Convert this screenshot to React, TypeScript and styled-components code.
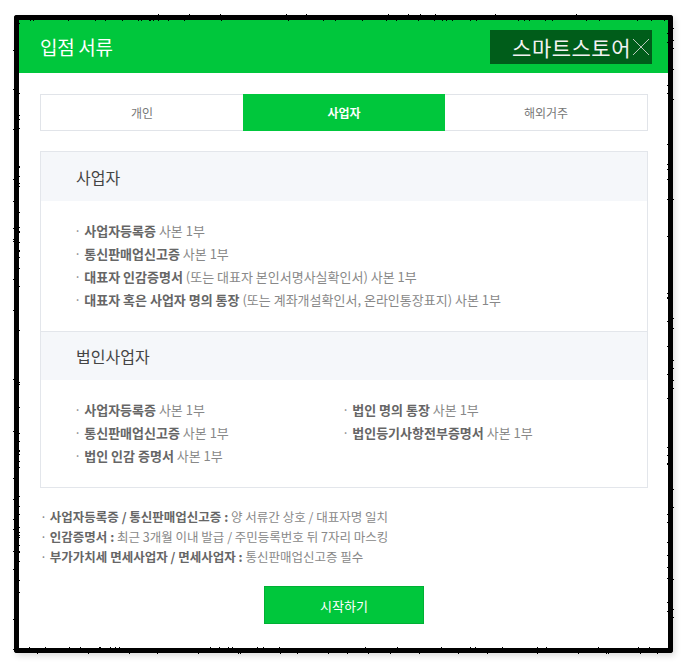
import styled, { createGlobalStyle } from "styled-components";

const GlobalStyle = createGlobalStyle`
  html, body {
    margin: 0;
    padding: 0;
    background: #ffffff;
  }
  body {
    font-family: "Noto Sans CJK KR", "Noto Sans", sans-serif;
  }
  * {
    box-sizing: border-box;
  }
`;

type Item = { bold: string; rest: string };

const soleItems: Item[] = [
  { bold: "사업자등록증", rest: " 사본 1부" },
  { bold: "통신판매업신고증", rest: " 사본 1부" },
  { bold: "대표자 인감증명서", rest: " (또는 대표자 본인서명사실확인서) 사본 1부" },
  { bold: "대표자 혹은 사업자 명의 통장", rest: " (또는 계좌개설확인서, 온라인통장표지) 사본 1부" },
];

const corpItems: Item[] = [
  { bold: "사업자등록증", rest: " 사본 1부" },
  { bold: "법인 명의 통장", rest: " 사본 1부" },
  { bold: "통신판매업신고증", rest: " 사본 1부" },
  { bold: "법인등기사항전부증명서", rest: " 사본 1부" },
  { bold: "법인 인감 증명서", rest: " 사본 1부" },
];

const notes: Item[] = [
  { bold: "사업자등록증 / 통신판매업신고증 :", rest: " 양 서류간 상호 / 대표자명 일치" },
  { bold: "인감증명서 :", rest: " 최근 3개월 이내 발급 / 주민등록번호 뒤 7자리 마스킹" },
  { bold: "부가가치세 면세사업자 / 면세사업자 :", rest: " 통신판매업신고증 필수" },
];

const tabs = ["개인", "사업자", "해외거주"];

const App = () => {
  return (
    <Page>
      <GlobalStyle />
      <svg width="0" height="0" style={{ position: "absolute" }}>
        <filter id="rough">
          <feTurbulence type="fractalNoise" baseFrequency="0.9" numOctaves="2" result="noise" />
          <feDisplacementMap in="SourceGraphic" in2="noise" scale="2.5" />
        </filter>
      </svg>
      <Frame>
        <Header>
          <Title>입점 서류</Title>
          <StoreBadge>
            스마트스토어
            <CloseMark>
              <svg width="18" height="18" viewBox="0 0 18 18">
                <path d="M1 1 L17 17 M17 1 L1 17" stroke="#b9c9bd" strokeWidth="1" fill="none" />
              </svg>
            </CloseMark>
          </StoreBadge>
        </Header>

        <Body>
          <Tabs>
            {tabs.map((t) => (
              <Tab key={t} $active={t === "사업자"}>
                {t}
              </Tab>
            ))}
          </Tabs>

          <Section>
            <SectionHead>사업자</SectionHead>
            <List>
              {soleItems.map((it) => (
                <Row key={it.bold}>
                  · <b>{it.bold}</b>
                  {it.rest}
                </Row>
              ))}
            </List>
            <SectionHead $top>법인사업자</SectionHead>
            <List $cols>
              {corpItems.map((it) => (
                <Row key={it.bold}>
                  · <b>{it.bold}</b>
                  {it.rest}
                </Row>
              ))}
            </List>
          </Section>

          <Notes>
            {notes.map((n) => (
              <Note key={n.bold}>
                · <b>{n.bold}</b>
                {n.rest}
              </Note>
            ))}
          </Notes>

          <Footer>
            <StartButton>시작하기</StartButton>
          </Footer>
        </Body>
      </Frame>
    </Page>
  );
};

const Page = styled.div`
  width: 687px;
  height: 668px;
  padding: 15px 14px 15px 14px;
`;

const Frame = styled.div`
  position: relative;
  width: 659px;
  height: 638px;
  border: 5px solid #000;
  border-radius: 3px;
  background: #fff;
  box-shadow: 2px 3px 6px rgba(0, 0, 0, 0.14);
  display: flex;
  flex-direction: column;

  &::before {
    content: "";
    position: absolute;
    inset: -5px;
    border: 5px solid #000;
    border-radius: 3px;
    filter: url(#rough);
    pointer-events: none;
  }
`;

const Header = styled.div`
  height: 53px;
  background: #00c73c;
  display: flex;
  align-items: center;
  justify-content: space-between;
  padding: 0 16px 0 21px;
`;

const Title = styled.h1`
  margin: 0;
  font-size: 19px;
  font-weight: 400;
  color: #fff;
  letter-spacing: -0.3px;
`;

const StoreBadge = styled.div`
  width: 162px;
  height: 34px;
  background: #005d1a;
  color: #f2f2f2;
  font-size: 21px;
  display: flex;
  align-items: center;
  justify-content: flex-end;
  padding-right: 2px;
  letter-spacing: 0.5px;
`;

const CloseMark = styled.span`
  display: inline-flex;
  margin-left: 1px;
`;

const Body = styled.div`
  flex: 1;
  padding: 21px 20px 24px 21px;
  display: flex;
  flex-direction: column;
`;

const Tabs = styled.div`
  display: grid;
  grid-template-columns: 1fr 1fr 1fr;
  height: 37px;
  border: 1px solid #e1e4e9;
`;

const Tab = styled.div<{ $active?: boolean }>`
  display: flex;
  align-items: center;
  justify-content: center;
  font-size: 12px;
  margin: ${(p) => (p.$active ? "-1px 0" : "0")};
  background: ${(p) => (p.$active ? "#00c73c" : "#fff")};
  color: ${(p) => (p.$active ? "#fff" : "#777")};
  font-weight: ${(p) => (p.$active ? 700 : 400)};
`;

const Section = styled.div`
  margin-top: 20px;
  border: 1px solid #e3e6eb;
`;

const SectionHead = styled.div<{ $top?: boolean }>`
  height: 49px;
  background: #f5f7fa;
  border-top: ${(p) => (p.$top ? "1px solid #e3e6eb" : "none")};
  display: flex;
  align-items: center;
  padding-left: 35px;
  font-size: 16px;
  color: #444;
`;

const List = styled.div<{ $cols?: boolean }>`
  display: grid;
  grid-template-columns: ${(p) => (p.$cols ? "268px 1fr" : "1fr")};
  padding: 18px 0 20px 33px;
`;

const Row = styled.div`
  font-size: 13px;
  line-height: 23px;
  color: #888;
  white-space: nowrap;

  b {
    color: #666;
    font-weight: 600;
  }
`;

const Notes = styled.div`
  margin-top: 19px;
`;

const Note = styled.div`
  font-size: 12.5px;
  line-height: 20px;
  color: #888;
  white-space: nowrap;

  b {
    color: #666;
    font-weight: 600;
  }
`;

const Footer = styled.div`
  margin-top: auto;
  display: flex;
  justify-content: center;
`;

const StartButton = styled.button`
  width: 160px;
  height: 38px;
  background: #00c73c;
  border: 1px solid #00b034;
  color: #fff;
  font-family: inherit;
  font-size: 13px;
  cursor: pointer;
`;

export default App;
